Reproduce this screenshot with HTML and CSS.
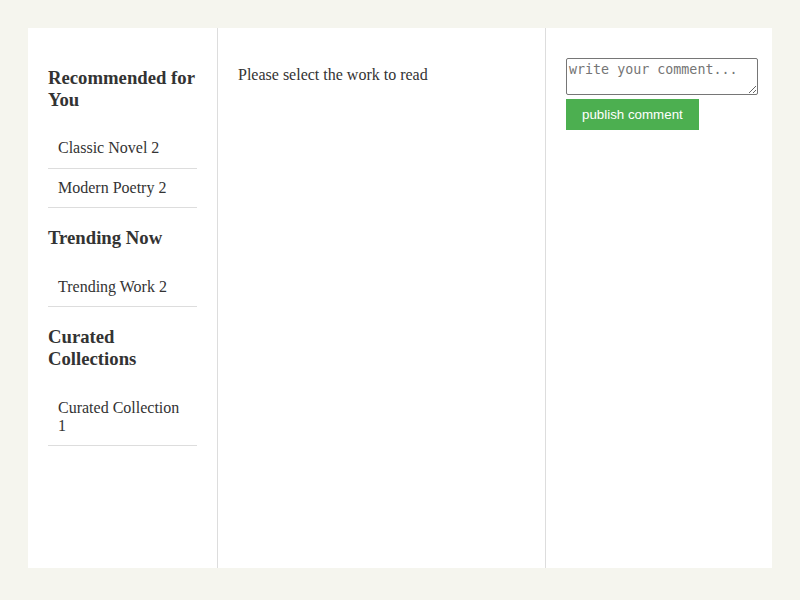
FILE: index.html
```html
<!DOCTYPE html>
<html>
<head>
<meta charset="utf-8">
<link rel="stylesheet" href="styles.css">
</head>
<body>
<div class="app">
  <aside class="sidebar">
    <h3>Recommended for You</h3>
    <ul class="list">
      <li>Classic Novel 2</li>
      <li>Modern Poetry 2</li>
    </ul>
    <h3>Trending Now</h3>
    <ul class="list">
      <li>Trending Work 2</li>
    </ul>
    <h3>Curated Collections</h3>
    <ul class="list">
      <li>Curated Collection 1</li>
    </ul>
  </aside>
  <main class="reader">
    <p>Please select the work to read</p>
  </main>
  <section class="comments">
    <textarea class="comment-box" rows="2" placeholder="write your comment..."></textarea>
    <button class="publish">publish comment</button>
  </section>
</div>
</body>
</html>
```
FILE: styles.css
```css
html, body {
  margin: 0;
  padding: 0;
}
body {
  background: #f5f5ee;
  font-family: "Liberation Serif", "Times New Roman", serif;
  color: #333;
  padding: 28px;
  height: 600px;
  box-sizing: border-box;
  overflow: hidden;
}
.app {
  display: flex;
  background: #fff;
  height: 540px;
}
.sidebar {
  width: 190px;
  box-sizing: border-box;
  padding: 20px;
  border-right: 1px solid #ddd;
  flex: none;
}
.sidebar h3 {
  font-size: 18.72px;
  margin: 18.72px 0;
}
.list {
  list-style: none;
  margin: 0;
  padding: 0;
}
.list li {
  padding: 10px;
  border-bottom: 1px solid #ddd;
  font-size: 16px;
  line-height: 18.4px;
}
.reader {
  flex: 1;
  padding: 20px;
  border-right: 1px solid #ddd;
}
.reader p {
  margin: 18px 0 16px;
  font-size: 16px;
}
.comments {
  width: 226px;
  box-sizing: border-box;
  padding: 30px 20px 20px;
  flex: none;
}
.comment-box {
  display: block;
  width: 100%;
  margin: 0 0 4px;
  padding: 3px 2px 1px;
  border: 1px solid #767676;
  border-radius: 2px;
  font-family: "DejaVu Sans Mono", monospace;
  font-size: 13.33px;
  line-height: 15.5px;
  resize: vertical;
}
.comment-box::placeholder {
  color: #757575;
}
.publish {
  display: block;
  background: #4caf50;
  color: #fff;
  border: none;
  font-family: "Liberation Sans", Arial, sans-serif;
  font-size: 13.33px;
  padding: 8px 16px;
  height: 31px;
  cursor: pointer;
}
```
